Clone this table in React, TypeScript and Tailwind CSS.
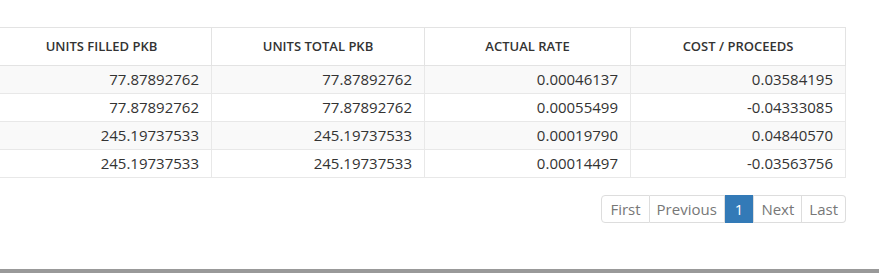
import React from 'react';

const rows = [
  ['77.87892762', '77.87892762', '0.00046137', '0.03584195'],
  ['77.87892762', '77.87892762', '0.00055499', '-0.04333085'],
  ['245.19737533', '245.19737533', '0.00019790', '0.04840570'],
  ['245.19737533', '245.19737533', '0.00014497', '-0.03563756'],
];

const headers = ['Units Filled PKB', 'Units Total PKB', 'Actual Rate', 'Cost / Proceeds'];
const widths = ['w-[220px]', 'w-[213px]', 'w-[206px]', 'w-[215px]'];

const App: React.FC = () => {
  return (
    <div className="h-[273px] w-[879px] overflow-hidden bg-white flex flex-col text-[#333]" style={{ fontFamily: '"Open Sans", sans-serif' }}>
      <div className="pt-[27px] overflow-hidden">
        <table className="-ml-[9px] border-collapse table-fixed">
          <thead>
            <tr>
              {headers.map((h, i) => (
                <th
                  key={h}
                  className={`${widths[i]} h-[38px] border border-[#e3e3e3] text-center text-[13px] font-semibold uppercase text-[#333] align-middle`}
                >
                  {h}
                </th>
              ))}
            </tr>
          </thead>
          <tbody>
            {rows.map((r, ri) => (
              <tr key={ri} className={ri % 2 === 0 ? 'bg-[#f9f9f9]' : 'bg-white'}>
                {r.map((c, ci) => (
                  <td
                    key={ci}
                    className="h-[28px] border border-[#e8e8e8] text-right pr-[12px] text-[15px] leading-none text-[#333]"
                  >
                    {c}
                  </td>
                ))}
              </tr>
            ))}
          </tbody>
        </table>
      </div>

      <div className="flex justify-end pr-[33px] mt-[17px]">
        <ul className="flex text-[15px] text-[#777] leading-none">
          <li className="h-[28px] flex items-center px-[8px] border border-[#ddd] rounded-l-[4px]">First</li>
          <li className="h-[28px] flex items-center px-[7px] border border-l-0 border-[#ddd]">Previous</li>
          <li className="h-[28px] flex items-center px-[10px] bg-[#337ab7] text-white">1</li>
          <li className="h-[28px] flex items-center px-[7px] border border-[#ddd]">Next</li>
          <li className="h-[28px] flex items-center px-[7px] border border-l-0 border-[#ddd] rounded-r-[4px]">Last</li>
        </ul>
      </div>

      <div className="flex-1" />
      <div className="h-[4px] bg-[#999]" />
    </div>
  );
};

export default App;
